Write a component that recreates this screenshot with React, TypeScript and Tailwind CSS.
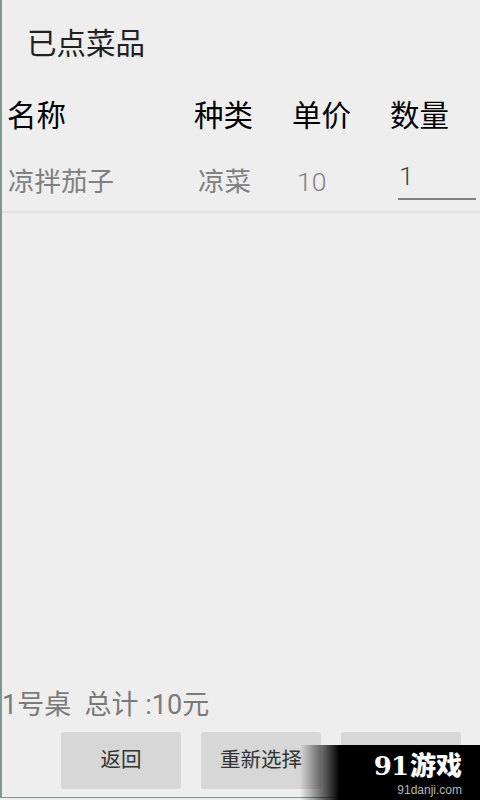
export default function App() {
  const font = { fontFamily: '"Roboto","Noto Sans CJK SC",sans-serif' };
  return (
    <div className="relative w-[480px] h-[800px] overflow-hidden bg-[#eeeeee] flex flex-col" style={font}>
      <div className="flex flex-col h-[798px] border-l-2 border-b border-[#7f978e]">
        <div className="h-[88px] pl-[25px] pt-[23px] text-[29.5px] leading-[42px] text-[#222222]">已点菜品</div>
        <div className="flex h-[57px] items-center text-[29.5px] text-black">
          <div className="w-[192px] pl-[5px]">名称</div>
          <div className="w-[98px]">种类</div>
          <div className="w-[98px]">单价</div>
          <div>数量</div>
        </div>
        <div className="flex h-[68px] border-b-2 border-[#e2e2e2] text-[26.5px] text-[#808080]">
          <div className="w-[196px] pl-[6px] pt-[17px] leading-[40px]">凉拌茄子</div>
          <div className="w-[99px] pt-[17px] leading-[40px]">凉菜</div>
          <div className="w-[101px] pt-[17px] leading-[40px] font-light">10</div>
          <div className="w-[78px] h-[55px] border-b-2 border-[#808080] pl-[1px] pt-[11px] leading-[40px] text-[#444444] font-light">1</div>
        </div>
        <div className="flex-1"></div>
        <div className="text-[27px] leading-[40px] text-[#7a7a7a] mb-[7px] whitespace-pre">1号桌  总计 :10元</div>
        <div className="flex gap-[20px] pl-[59px] pb-[8px]">
          <button className="w-[120px] h-[57px] rounded-[3px] bg-[#d7d7d7] text-[20.5px] text-[#333333]">返回</button>
          <button className="w-[120px] h-[57px] rounded-[3px] bg-[#d7d7d7] text-[20.5px] text-[#333333]">重新选择</button>
          <button className="w-[120px] h-[57px] rounded-[3px] bg-[#d7d7d7]"></button>
        </div>
      </div>
      <div className="absolute right-0 bottom-0 w-[180px] h-[55px] bg-gradient-to-r from-transparent via-black to-black via-[22%] flex flex-col items-end pr-[18px]">
        <div className="flex items-center h-[30px] mt-[6px] text-white font-black leading-none whitespace-nowrap">
          <span className="text-[26px] mr-[2px] tracking-[-1px]" style={{ fontFamily: '"DejaVu Serif",serif' }}>91</span>
          <span className="text-[26px]">游戏</span>
        </div>
        <div className="text-[12px] leading-[14px] mt-[2px] text-[#b8b8b8]" style={{ fontFamily: '"Liberation Sans",sans-serif' }}>91danji.com</div>
      </div>
    </div>
  );
}
